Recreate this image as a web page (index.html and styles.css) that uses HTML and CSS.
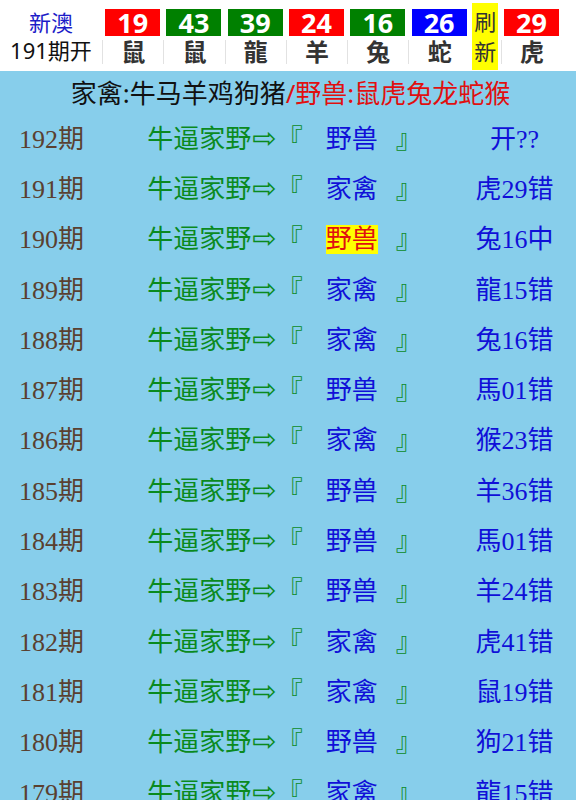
FILE: index.html
```html
<!DOCTYPE html>
<html lang="zh">

<head>
    <meta charset="UTF-8">
    <meta name="viewport" content="width=device-width, initial-scale=1.0">
    <title>新澳 家禽野兽</title>
    <link rel="stylesheet" href="styles.css">
</head>

<body>

    <header class="head">
        <div class="brand">
            <span class="brand-name">新澳</span>
            <span class="brand-issue">191期开</span>
        </div>
        <div class="ball"><span class="num red">19</span><span class="zod">鼠</span></div>
        <div class="ball"><span class="num green">43</span><span class="zod">鼠</span></div>
        <div class="ball"><span class="num green">39</span><span class="zod">龍</span></div>
        <div class="ball"><span class="num red">24</span><span class="zod">羊</span></div>
        <div class="ball"><span class="num green">16</span><span class="zod">兔</span></div>
        <div class="ball"><span class="num blue">26</span><span class="zod">蛇</span></div>
        <div class="refresh"><span>刷<br>新</span></div>
        <div class="ball"><span class="num red">29</span><span class="zod">虎</span></div>
    </header>

    <main>
        <h2 class="legend">家禽:牛马羊鸡狗猪<em>/野兽:鼠虎兔龙蛇猴</em></h2>

        <ul class="rows">
            <li><span class="issue">192期</span><span class="tip">牛逼家野<i>⇨</i>『<b>野兽</b>』</span><span class="res">开??</span></li>
            <li><span class="issue">191期</span><span class="tip">牛逼家野<i>⇨</i>『<b>家禽</b>』</span><span class="res">虎29错</span></li>
            <li><span class="issue">190期</span><span class="tip">牛逼家野<i>⇨</i>『<b class="hit">野兽</b>』</span><span class="res">兔16中</span></li>
            <li><span class="issue">189期</span><span class="tip">牛逼家野<i>⇨</i>『<b>家禽</b>』</span><span class="res">龍15错</span></li>
            <li><span class="issue">188期</span><span class="tip">牛逼家野<i>⇨</i>『<b>家禽</b>』</span><span class="res">兔16错</span></li>
            <li><span class="issue">187期</span><span class="tip">牛逼家野<i>⇨</i>『<b>野兽</b>』</span><span class="res">馬01错</span></li>
            <li><span class="issue">186期</span><span class="tip">牛逼家野<i>⇨</i>『<b>家禽</b>』</span><span class="res">猴23错</span></li>
            <li><span class="issue">185期</span><span class="tip">牛逼家野<i>⇨</i>『<b>野兽</b>』</span><span class="res">羊36错</span></li>
            <li><span class="issue">184期</span><span class="tip">牛逼家野<i>⇨</i>『<b>野兽</b>』</span><span class="res">馬01错</span></li>
            <li><span class="issue">183期</span><span class="tip">牛逼家野<i>⇨</i>『<b>野兽</b>』</span><span class="res">羊24错</span></li>
            <li><span class="issue">182期</span><span class="tip">牛逼家野<i>⇨</i>『<b>家禽</b>』</span><span class="res">虎41错</span></li>
            <li><span class="issue">181期</span><span class="tip">牛逼家野<i>⇨</i>『<b>家禽</b>』</span><span class="res">鼠19错</span></li>
            <li><span class="issue">180期</span><span class="tip">牛逼家野<i>⇨</i>『<b>野兽</b>』</span><span class="res">狗21错</span></li>
            <li><span class="issue">179期</span><span class="tip">牛逼家野<i>⇨</i>『<b>家禽</b>』</span><span class="res">龍15错</span></li>
        </ul>
    </main>

</body>

</html>
```

FILE: styles.css
```css
body {
    margin: 0;
    background: #87ceeb;
    font-family: "Noto Sans", "Noto Sans CJK SC", sans-serif;
}

/* cabecera con los numeros */
.head {
    display: flex;
    height: 71px;
    background: #fff;
}

.brand {
    width: 102px;
    display: flex;
    flex-direction: column;
    align-items: center;
    padding-top: 8px;
    box-sizing: border-box;

    .brand-name {
        color: #1c1cc8;
        font-size: 22px;
        line-height: 28px;
    }

    .brand-issue {
        color: #111;
        font-size: 22px;
        line-height: 28px;
    }
}

.ball {
    width: 61.3px;
    display: flex;
    flex-direction: column;
    align-items: center;
    padding-top: 9px;
    box-sizing: border-box;

    .num {
        width: 55px;
        height: 27px;
        color: #fff;
        font-weight: 700;
        font-size: 27px;
        line-height: 27px;
        text-align: center;
    }

    .zod {
        align-self: stretch;
        margin-top: 4px;
        height: 24px;
        border-left: 1px solid #e2e2e2;
        color: #333;
        font-weight: 700;
        font-size: 24px;
        line-height: 24px;
        text-align: center;
    }
}

.red { background: #f00; }
.green { background: #008000; }
.blue { background: #00f; }

.refresh {
    width: 31px;
    display: flex;
    justify-content: center;
    padding-top: 3px;

    span {
        width: 26px;
        height: 67px;
        background: #ff0;
        color: #333;
        font-size: 22px;
        line-height: 30px;
        text-align: center;
        padding-top: 3px;
        box-sizing: border-box;
    }
}

/* listado de periodos */
.legend {
    margin: 0;
    height: 40px;
    padding-left: 5px;
    font-size: 26px;
    font-weight: 400;
    line-height: 44px;
    text-align: center;
    color: #111;

    em {
        font-style: normal;
        color: #e01010;
    }
}

.rows {
    list-style: none;
    margin: 0;
    padding: 0;

    li {
        display: grid;
        grid-template-columns: 103px 350px 1fr;
        align-items: center;
        height: 50.3px;
        font-family: "Liberation Serif", "Noto Sans CJK SC", serif;
        font-size: 26px;
    }

    .issue {
        color: #5a4030;
        text-align: center;
    }

    .tip {
        color: #0a8a1e;
        text-align: center;
        white-space: pre;
        padding-left: 13px;

        i {
            font-style: normal;
            font-family: "DejaVu Sans", sans-serif;
            font-size: 29px;
            margin-left: 1px;
        }

        b {
            font-weight: 400;
            color: #1010d8;
            margin: 0 18px 0 23px;
        }

        .hit {
            background: #ff0;
            color: #e01010;
        }
    }

    .res {
        color: #1010d8;
        text-align: center;
    }
}
```
